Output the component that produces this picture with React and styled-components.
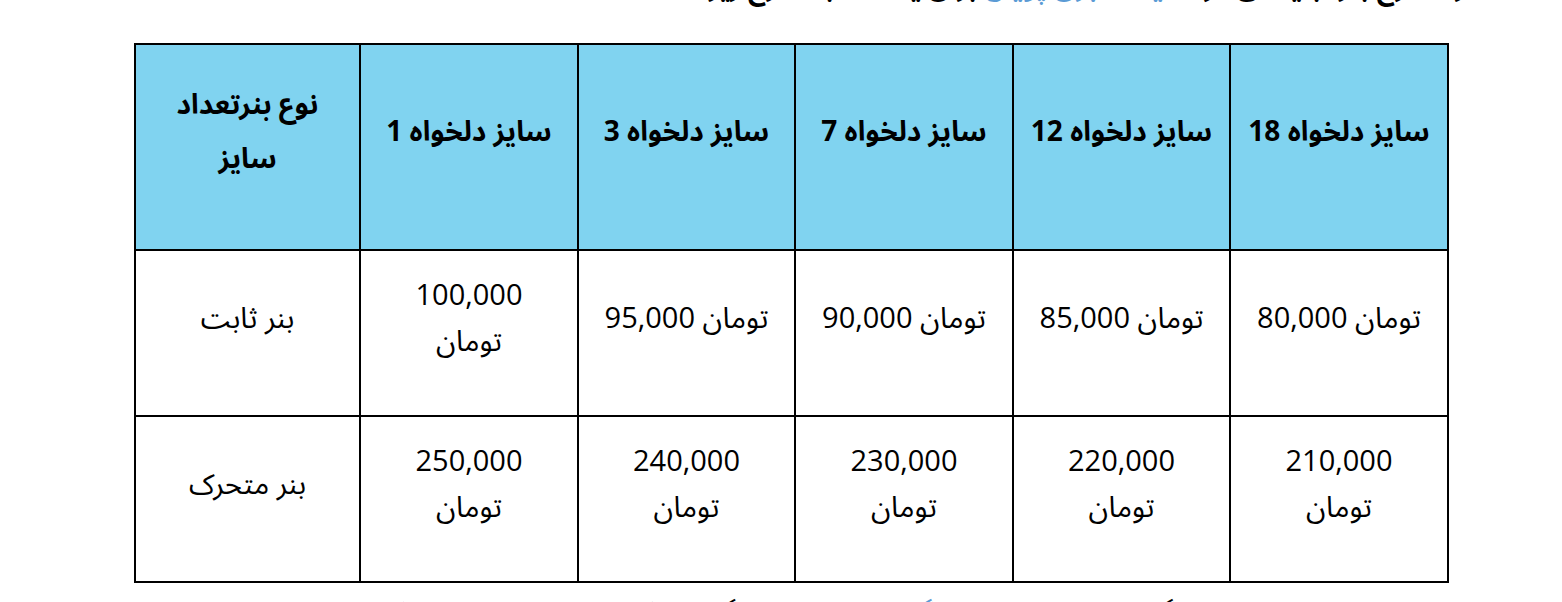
import React from "react";
import styled, { createGlobalStyle } from "styled-components";

const GlobalStyle = createGlobalStyle`
  html, body {
    margin: 0;
    padding: 0;
    background: #ffffff;
    overflow: hidden;
  }
  body {
    font-family: "Open Sans", "Noto Sans Arabic", "DejaVu Sans", sans-serif;
    color: #000;
  }
`;

const headers = [
  ["نوع بنرتعداد", "سایز"],
  ["سایز دلخواه 1"],
  ["سایز دلخواه 3"],
  ["سایز دلخواه 7"],
  ["سایز دلخواه 12"],
  ["سایز دلخواه 18"],
];

const rows = [
  [["بنر ثابت"], ["100,000", "تومان"], ["95,000 تومان"], ["90,000 تومان"], ["85,000 تومان"], ["80,000 تومان"]],
  [["بنر متحرک"], ["250,000", "تومان"], ["240,000", "تومان"], ["230,000", "تومان"], ["220,000", "تومان"], ["210,000", "تومان"]],
];

const colWidths = [225, 218, 217, 218, 217, 218];

export default function App() {
  return (
    <>
      <GlobalStyle />
      <Page>
        <Paragraph $bold>
          تعرفه درج بنر تبلیغاتی در <Link>سایت خبری پویان</Link> برای یک ماه به شرح زیر است
        </Paragraph>
        <Table>
          <colgroup>
            {colWidths.map((w, i) => (
              <col key={i} style={{ width: w }} />
            ))}
          </colgroup>
          <thead>
            <tr>
              {headers.map((lines, i) => (
                <HeadCell key={i}>
                  {lines.map((l, j) => (
                    <HeadLine key={j}>{l}</HeadLine>
                  ))}
                </HeadCell>
              ))}
            </tr>
          </thead>
          <tbody>
            {rows.map((row, r) => (
              <tr key={r}>
                {row.map((lines, i) => (
                  <BodyCell key={i}>
                    {lines.map((l, j) => (
                      <BodyLine key={j}>{l}</BodyLine>
                    ))}
                  </BodyCell>
                ))}
              </tr>
            ))}
          </tbody>
        </Table>
        <Paragraph>
          برای اطلاعات بیشتر و رزرو جایگاه تبلیغاتی با <Link>واحد بازرگانی پویان</Link> تماس بگیرید تا کارشناسان ما راهنمایی کنند
        </Paragraph>
      </Page>
    </>
  );
}

const Page = styled.div`
  width: 1562px;
  height: 602px;
  overflow: hidden;
`;

const Paragraph = styled.p`
  direction: rtl;
  text-align: right;
  margin: ${(p) => (p.$bold ? "-31px 70px 0 0" : "11px 70px 0 0")};
  font-size: 27px;
  line-height: 34px;
  font-weight: ${(p) => (p.$bold ? 700 : 400)};
  white-space: nowrap;
`;

const Link = styled.span`
  color: #5b9bd5;
`;

const Table = styled.table`
  margin: 40px 0 0 134px;
  width: 1314px;
  table-layout: fixed;
  border-collapse: collapse;
  border: 2px solid #000;
`;

const HeadCell = styled.th`
  box-sizing: border-box;
  background: #80d3f0;
  border: 2px solid #000;
  height: 206px;
  padding: 0 6px 34px;
  vertical-align: middle;
  text-align: center;
  font-weight: 700;
`;

const HeadLine = styled.div`
  font-size: 28px;
  line-height: 54px;
  white-space: nowrap;
`;

const BodyCell = styled.td`
  box-sizing: border-box;
  border: 2px solid #000;
  height: 166px;
  padding: 0 6px 32px;
  vertical-align: middle;
  text-align: center;
`;

const BodyLine = styled.div`
  font-size: 29px;
  line-height: 46px;
  white-space: nowrap;
`;
